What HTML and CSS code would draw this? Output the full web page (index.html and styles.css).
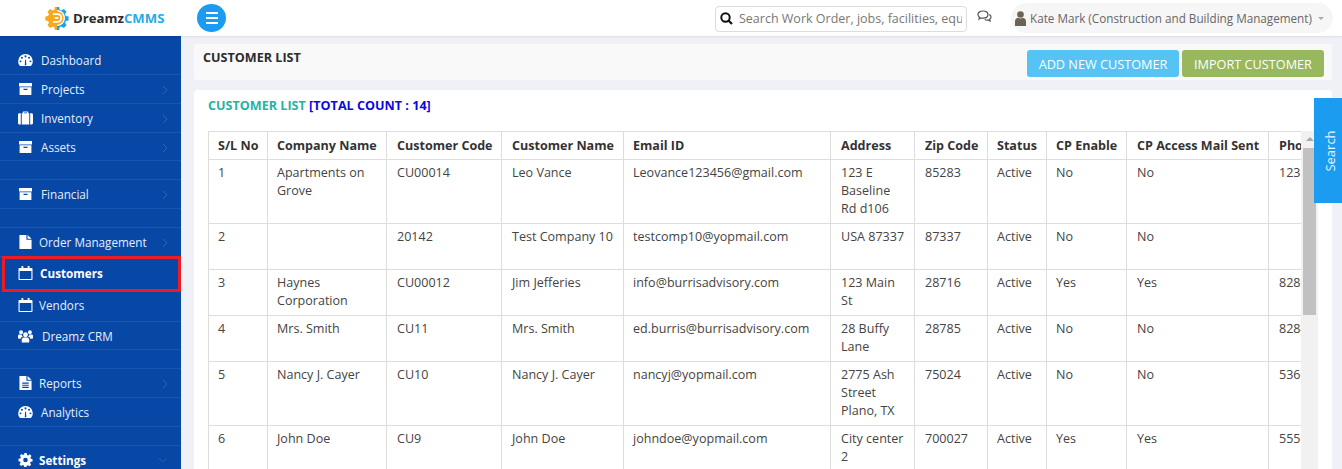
FILE: index.html
```html
<!DOCTYPE html>
<html lang="en">
<head>
<meta charset="utf-8">
<title>DreamzCMMS - Customer List</title>
<link rel="stylesheet" href="styles.css">
</head>
<body>
<svg class="defs" width="0" height="0" aria-hidden="true">
  <symbol id="i-dash" viewBox="0 0 16 14"><path fill-rule="evenodd" d="M8 0.500a7.800 7.800 0 0 0-7.800 7.800c0 2 .7 3.800 2 5.200h11.600a7.800 7.800 0 0 0 2-5.200A7.800 7.800 0 0 0 8 .5zM8 2a1 1 0 1 1 0 2.200A1 1 0 0 1 8 2zM4.200 3.600a1 1 0 1 1 0 2.100 1 1 0 0 1 0-2.100zM2.700 7.400a1 1 0 1 1 0 2.100 1 1 0 0 1 0-2.100zM13.300 7.400a1 1 0 1 1 0 2.100 1 1 0 0 1 0-2.100zM11.800 3.600a1 1 0 1 1 0 2.100 1 1 0 0 1 0-2.100zM7.200 12.600 7.600 6.600h.9l.4 6z"/></symbol>
  <symbol id="i-box" viewBox="0 0 15 14"><path fill-rule="evenodd" d="M1 1h13v3.400H1zM1.600 5.300h11.800V13H1.600zM5.500 6.700v1.200h4V6.700z"/></symbol>
  <symbol id="i-case" viewBox="0 0 16 14"><path fill-rule="evenodd" d="M5 2V.9C5 .4 5.400 0 5.900 0h4.200c.5 0 .9.400.9.900V2h1v12H4V2zM6.200 2h3.600V1.200H6.200zM3 2v12H1.600C.7 14 0 13.300 0 12.400V3.600C0 2.700.7 2 1.600 2zM13 2h1.400c.9 0 1.600.7 1.600 1.600v8.800c0 .9-.7 1.600-1.600 1.600H13z"/></symbol>
  <symbol id="i-file" viewBox="0 0 13 15"><path d="M0 0h7.500v5H13v10H0zM8.700 0 13 3.900H8.700z"/></symbol>
  <symbol id="i-text" viewBox="0 0 13 15"><path fill-rule="evenodd" d="M0 0h7.500v5H13v10H0zM8.700 0 13 3.900H8.700zM3 7v1.200h7V7zM3 9.300v1.200h7V9.300zM3 11.600v1.200h7v-1.200z"/></symbol>
  <symbol id="i-cal" viewBox="0 0 14 14"><path fill-rule="evenodd" d="M3 0h1.800v2h4.400V0H11v2h2c.6 0 1 .4 1 1v10c0 .6-.4 1-1 1H1c-.6 0-1-.4-1-1V3c0-.6.4-1 1-1h2zM1.100 5v8h11.800V5z"/></symbol>
  <symbol id="i-users" viewBox="0 0 16 14"><path d="M8 3a2.600 2.600 0 1 1 0 5.200A2.600 2.600 0 0 1 8 3zM3.300.8a2.100 2.100 0 1 1 0 4.200 2.100 2.100 0 0 1 0-4.200zM12.700.8a2.100 2.100 0 1 1 0 4.200 2.100 2.100 0 0 1 0-4.200zM4 13.800V11c0-1.500 1-2.500 2-2.500h4c1 0 2 1 2 2.500v2.800zM0 9V7c0-1 .7-1.500 1.500-1.500h2.200c.2 1 .8 1.900 1.500 2.400C4 8 3.200 8.400 2.900 9.800H1C.4 9.800 0 9.500 0 9zM16 9V7c0-1-.7-1.500-1.500-1.500h-2.200c-.2 1-.8 1.900-1.500 2.400 1.200.1 2 .5 2.300 1.900H15c.6 0 1-.3 1-.8z"/></symbol>
  <symbol id="i-cog" viewBox="0 0 14 14"><path fill-rule="evenodd" d="M5.800 0h2.400l.3 1.900 1.200.5L11.300 1.300 13 3l-1.100 1.600.5 1.200 1.600.3v2.400l-1.900.3-.5 1.200 1.100 1.600-1.700 1.700-1.600-1.100-1.200.5-.3 1.700H5.800l-.3-1.900-1.200-.5L2.700 13 1 11.300l1.100-1.600-.5-1.200L0 8.200V5.800l1.900-.3.5-1.200L1.300 2.700 3 1l1.600 1.100 1.200-.5zM7 4.700a2.300 2.300 0 1 0 0 4.600 2.300 2.300 0 0 0 0-4.600z"/></symbol>
  <symbol id="i-chev" viewBox="0 0 6 10"><path d="M1 1l4 4-4 4" fill="none" stroke="currentColor" stroke-width="1"/></symbol>
  <symbol id="i-down" viewBox="0 0 12 6"><path d="M1 1l5 4 5-4" fill="none" stroke="currentColor" stroke-width="1"/></symbol>
</svg>

<div class="app">
  <header class="topbar">
    <div class="brand">
      <svg class="logo" width="24" height="24" viewBox="0 0 26 26" aria-hidden="true">
        <path fill="#1da1e8" d="M13 1h2.200l.6 3 2 .9 2.600-1.700 3 3-1.700 2.600.9 2 3 .6v4.200l-3 .6-.9 2 1.700 2.600-3 3-2.600-1.700-2 .9-.6 3H13z"/>
        <circle cx="13" cy="13" r="8.700" fill="#fff"/>
        <path fill="#f7a81b" d="M13 1h-2.200l-.6 3-2 .9-2.600-1.700-3 3 1.700 2.600-.9 2-3 .6v4.200l3 .6.9 2-1.700 2.600 3 3 2.600-1.700 2 .9.6 3H13z"/>
        <circle cx="13" cy="13" r="7.200" fill="#f7a81b"/>
        <path d="M8.500 8.800h5a4.200 4.200 0 0 1 0 8.400h-5" fill="none" stroke="#fff" stroke-width="2"/>
        <path d="M10.500 13h4" stroke="#fff" stroke-width="2"/>
      </svg>
      <span class="brand-name">Dreamz<span class="brand-accent">CMMS</span></span>
    </div>
    <button class="menu-btn" type="button" aria-label="Menu">
      <span></span><span></span><span></span>
    </button>
    <div class="top-right">
      <div class="search-box">
        <svg class="search-ico" width="13" height="13" viewBox="0 0 13 13" aria-hidden="true"><circle cx="5.500" cy="5.500" r="4.200" fill="none" stroke="#111" stroke-width="2"/><path d="M8.500 8.500 12 12" stroke="#111" stroke-width="2.200"/></svg>
        <span class="search-text">Search Work Order, jobs, facilities, equ</span>
      </div>
      <svg class="chat-ico" width="15" height="13" viewBox="0 0 15 13" aria-hidden="true"><path d="M6 1C3 1 1 2.600 1 4.600c0 1.100.6 2 1.500 2.700L2 9l2-1c.6.200 1.300.2 2 .2 3 0 5-1.600 5-3.600S9 1 6 1z" fill="none" stroke="#555" stroke-width="1.200"/><path d="M12.300 4.500c1 .6 1.700 1.500 1.700 2.500 0 .9-.5 1.700-1.300 2.300l.4 1.700-1.900-1c-1.200.2-2.500 0-3.500-.5" fill="none" stroke="#555" stroke-width="1.200"/></svg>
      <div class="user-pill">
        <svg class="user-ico" width="11" height="15" viewBox="0 0 11 15" aria-hidden="true"><circle cx="5.500" cy="3.500" r="3.300" fill="#6d6258"/><path d="M0 15v-4.500c0-2 1.300-3.500 3-3.700.7.500 1.600.8 2.500.8S7.300 7.300 8 6.800c1.700.2 3 1.700 3 3.700V15z" fill="#6d6258"/></svg>
        <span class="user-name">Kate Mark (Construction and Building Management)</span>
        <span class="caret"></span>
      </div>
    </div>
  </header>

  <div class="body-row">
    <nav class="sidebar">
      <a class="nav-item"><svg class="nav-ico"><use href="#i-dash"/></svg><span class="nav-label">Dashboard</span></a>
      <a class="nav-item"><svg class="nav-ico"><use href="#i-box"/></svg><span class="nav-label">Projects</span><svg class="chev"><use href="#i-chev"/></svg></a>
      <a class="nav-item"><svg class="nav-ico"><use href="#i-case"/></svg><span class="nav-label">Inventory</span><svg class="chev"><use href="#i-chev"/></svg></a>
      <a class="nav-item short"><svg class="nav-ico"><use href="#i-box"/></svg><span class="nav-label">Assets</span><svg class="chev"><use href="#i-chev"/></svg></a>
      <div class="nav-gap"></div>
      <a class="nav-item"><svg class="nav-ico"><use href="#i-box"/></svg><span class="nav-label">Financial</span><svg class="chev"><use href="#i-chev"/></svg></a>
      <div class="nav-gap"></div>
      <a class="nav-item tight"><svg class="nav-ico"><use href="#i-file"/></svg><span class="nav-label">Order Management</span><svg class="chev"><use href="#i-chev"/></svg></a>
      <a class="nav-item active"><svg class="nav-ico"><use href="#i-cal"/></svg><span class="nav-label">Customers</span></a>
      <a class="nav-item tall tight"><svg class="nav-ico"><use href="#i-cal"/></svg><span class="nav-label">Vendors</span></a>
      <a class="nav-item short wide"><svg class="nav-ico"><use href="#i-users"/></svg><span class="nav-label">Dreamz CRM</span></a>
      <div class="nav-gap"></div>
      <a class="nav-item tight"><svg class="nav-ico"><use href="#i-text"/></svg><span class="nav-label">Reports</span><svg class="chev"><use href="#i-chev"/></svg></a>
      <a class="nav-item"><svg class="nav-ico"><use href="#i-dash"/></svg><span class="nav-label">Analytics</span></a>
      <div class="nav-gap"></div>
      <a class="nav-item tight bold"><svg class="nav-ico"><use href="#i-cog"/></svg><span class="nav-label">Settings</span><svg class="chev-down"><use href="#i-down"/></svg></a>
    </nav>

    <main class="content">
      <section class="page-head">
        <h1 class="page-title">CUSTOMER LIST</h1>
        <div class="actions">
          <button class="btn btn-blue" type="button">ADD NEW CUSTOMER</button>
          <button class="btn btn-green" type="button">IMPORT CUSTOMER</button>
        </div>
      </section>
      <section class="card">
        <h2 class="card-title">CUSTOMER LIST <span class="count">[TOTAL COUNT : 14]</span></h2>
        <div class="table-area">
          <div class="table-clip">
            <table class="grid">
              <colgroup>
                <col class="c1"><col class="c2"><col class="c3"><col class="c4"><col class="c5"><col class="c6"><col class="c7"><col class="c8"><col class="c9"><col class="c10"><col class="c11">
              </colgroup>
              <thead>
                <tr><th>S/L No</th><th>Company Name</th><th>Customer Code</th><th>Customer Name</th><th>Email ID</th><th>Address</th><th>Zip Code</th><th>Status</th><th>CP Enable</th><th>CP Access Mail Sent</th><th>Phone</th></tr>
              </thead>
              <tbody>
                <tr class="r64"><td>1</td><td>Apartments on Grove</td><td>CU00014</td><td>Leo Vance</td><td>Leovance123456@gmail.com</td><td>123 E Baseline Rd d106</td><td>85283</td><td>Active</td><td>No</td><td>No</td><td>123 456 7890</td></tr>
                <tr class="r46"><td>2</td><td></td><td>20142</td><td>Test Company 10</td><td>testcomp10@yopmail.com</td><td>USA 87337</td><td>87337</td><td>Active</td><td>No</td><td>No</td><td></td></tr>
                <tr class="r46"><td>3</td><td>Haynes Corporation</td><td>CU00012</td><td>Jim Jefferies</td><td>info@burrisadvisory.com</td><td>123 Main St</td><td>28716</td><td>Active</td><td>Yes</td><td>Yes</td><td>828-555-1234</td></tr>
                <tr class="r46"><td>4</td><td>Mrs. Smith</td><td>CU11</td><td>Mrs. Smith</td><td>ed.burris@burrisadvisory.com</td><td>28 Buffy Lane</td><td>28785</td><td>Active</td><td>No</td><td>No</td><td>8284567890</td></tr>
                <tr class="r64"><td>5</td><td>Nancy J. Cayer</td><td>CU10</td><td>Nancy J. Cayer</td><td>nancyj@yopmail.com</td><td>2775 Ash Street Plano, TX</td><td>75024</td><td>Active</td><td>No</td><td>No</td><td>536-123-4567</td></tr>
                <tr class="r46"><td>6</td><td>John Doe</td><td>CU9</td><td>John Doe</td><td>johndoe@yopmail.com</td><td>City center 2</td><td>700027</td><td>Active</td><td>Yes</td><td>Yes</td><td>5556667777</td></tr>
              </tbody>
            </table>
          </div>
          <div class="vscroll"><span class="vscroll-up"></span><span class="vscroll-thumb"></span></div>
        </div>
      </section>
    </main>
  </div>
  <button class="search-tab" type="button"><span>Search</span></button>
</div>
</body>
</html>
```

FILE: styles.css
```css
* { box-sizing: border-box; }
html, body { margin: 0; height: 100%; overflow: hidden; }
body { font-family: "Open Sans", "Noto Sans", sans-serif; font-size: 12.5px; color: #333; background: #f0f1f6; }
.defs { position: absolute; }
.app { height: 469px; display: flex; flex-direction: column; overflow: hidden; position: relative; }

.topbar { flex: 0 0 36px; height: 36px; display: flex; align-items: center; background: #fff; box-shadow: 0 1px 2px rgba(0,0,0,.08); position: relative; z-index: 2; }
.brand { width: 197px; display: flex; align-items: center; padding-left: 45px; gap: 4px; }
.logo { flex: none; }
.brand-name { font-weight: 700; font-size: 13.2px; color: #2b2b2b; }
.brand-accent { color: #29a9e8; }
.menu-btn { width: 29px; height: 28px; border: 0; border-radius: 50%; background: #1b9cf0; display: flex; flex-direction: column; justify-content: center; align-items: center; gap: 3px; padding: 0; }
.menu-btn span { width: 12px; height: 2px; background: #fff; display: block; }
.top-right { margin-left: auto; display: flex; align-items: center; }
.search-box { width: 252px; height: 26px; margin-top: 1px; border: 1px solid #ddd; border-radius: 4px; display: flex; align-items: center; padding: 0 4px; overflow: hidden; background: #fff; }
.search-ico { flex: none; margin-right: 6px; }
.search-text { white-space: nowrap; overflow: hidden; font-size: 12.5px; color: #777; }
.chat-ico { margin: 0 0 3px 10px; }
.user-pill { width: 322px; height: 30px; margin: 0 9px 0 19px; background: #f6f6f7; border-radius: 15px; display: flex; align-items: center; padding-left: 4px; }
.user-ico { margin-right: 4px; flex: none; }
.user-name { font-size: 11.7px; color: #666; white-space: nowrap; }
.caret { margin-left: 6px; border-left: 3px solid transparent; border-right: 3px solid transparent; border-top: 3px solid #aaa; }

.body-row { flex: 1; display: flex; min-height: 0; }
.sidebar { width: 181px; flex: none; background: #0747a6; color: #fff; padding-top: 10px; overflow: hidden; }
.nav-item { height: 29px; flex: none; display: flex; align-items: center; padding-left: 18px; color: #e6eefb; border-bottom: 1px solid #1a55ad; position: relative; font-size: 11.7px; }
.nav-item.short { height: 28px; }
.nav-item.tight .nav-label { margin-left: -2px; }
.nav-item.wide .nav-label { margin-left: 1px; }
.nav-item.tall { height: 30px; padding-bottom: 3px; }
.nav-gap { height: 19px; border-bottom: 1px solid #1a55ad; }
.nav-ico { width: 15px; height: 14px; fill: #fff; flex: none; margin-right: 8px; }
.nav-label { white-space: nowrap; }
.chev { position: absolute; right: 13px; top: 10px; width: 6px; height: 10px; color: #2e65b8; }
.chev-down { position: absolute; right: 13px; top: 11px; width: 10px; height: 6px; color: #2e65b8; }
.nav-item.active { height: 36px; width: 179px; margin: -1px 0 0 2px; padding: 0 0 2px 13px; border: 3px solid #ed1c24; font-weight: 700; color: #fff; }
.nav-item.active .nav-ico { margin-right: 7px; }
.nav-item.bold { font-weight: 700; color: #fff; }

.content { flex: 1; min-width: 0; padding: 8px 10px 0 13px; display: flex; flex-direction: column; gap: 10px; }
.page-head { height: 36px; flex: none; background: #f9f9fa; border-radius: 3px; display: flex; justify-content: space-between; padding: 6px 8px 0 9px; }
.page-title { margin: 0; font-size: 12.6px; font-weight: 700; color: #2c2c2c; line-height: 16px; }
.actions { display: flex; gap: 3px; height: 27px; }
.btn { border: 0; border-radius: 3px; color: #fff; font-family: inherit; font-size: 12.7px; height: 27px; padding: 0; white-space: nowrap; }
.btn-blue { width: 152px; background: #55c4f5; }
.btn-green { width: 142px; background: #97b85c; }

.card { flex: 1; background: #fff; border-radius: 4px 4px 0 0; padding: 7px 14px 0 14px; min-height: 0; overflow: hidden; }
.card-title { margin: 0; font-size: 12.6px; font-weight: 700; line-height: 17px; color: #26b3a5; }
.count { color: #0a0ae0; }
.table-area { display: flex; margin-top: 17px; }
.table-clip { flex: 1; min-width: 0; overflow: hidden; }
.grid { border-collapse: collapse; table-layout: fixed; width: 1200px; margin: 0; }
.c1 { width: 59px; } .c2 { width: 119px; } .c3 { width: 115px; } .c4 { width: 122px; } .c5 { width: 207px; } .c6 { width: 84px; } .c7 { width: 73px; } .c8 { width: 59px; } .c9 { width: 80px; } .c10 { width: 142px; } .c11 { width: 140px; }
.grid th, .grid td { border: 1px solid #ddd; padding: 4px 9px; text-align: left; vertical-align: top; line-height: 18px; font-size: 12.55px; color: #444; overflow: hidden; }
.grid th:nth-child(3), .grid td:nth-child(3),
.grid th:nth-child(4), .grid td:nth-child(4),
.grid th:nth-child(6), .grid td:nth-child(6),
.grid th:nth-child(7), .grid td:nth-child(7),
.grid th:nth-child(10), .grid td:nth-child(10),
.grid th:nth-child(11), .grid td:nth-child(11) { padding-left: 10px; }
.grid th { font-weight: 700; color: #333; height: 27px; padding-top: 5px; padding-bottom: 4px; white-space: nowrap; }
.r64 td { height: 64px; }
.r46 td { height: 46px; }
.vscroll { flex: none; width: 17px; background: #f1f1f1; position: relative; padding-top: 17px; height: 340px; }
.vscroll-up { position: absolute; top: 6px; left: 5px; border-left: 4px solid transparent; border-right: 4px solid transparent; border-bottom: 4px solid #a8a8a8; }
.vscroll-thumb { display: block; width: 13px; margin-left: 2px; height: 167px; background: #c1c1c1; }

.search-tab { position: absolute; right: 0; top: 98px; width: 28px; height: 105px; border: 0; padding: 0 0 0 4px; background: #1b9cf0; color: #e8f5fe; font-family: inherit; font-size: 13px; display: flex; align-items: center; justify-content: center; }
.search-tab span { transform: rotate(-90deg); display: block; }
```
